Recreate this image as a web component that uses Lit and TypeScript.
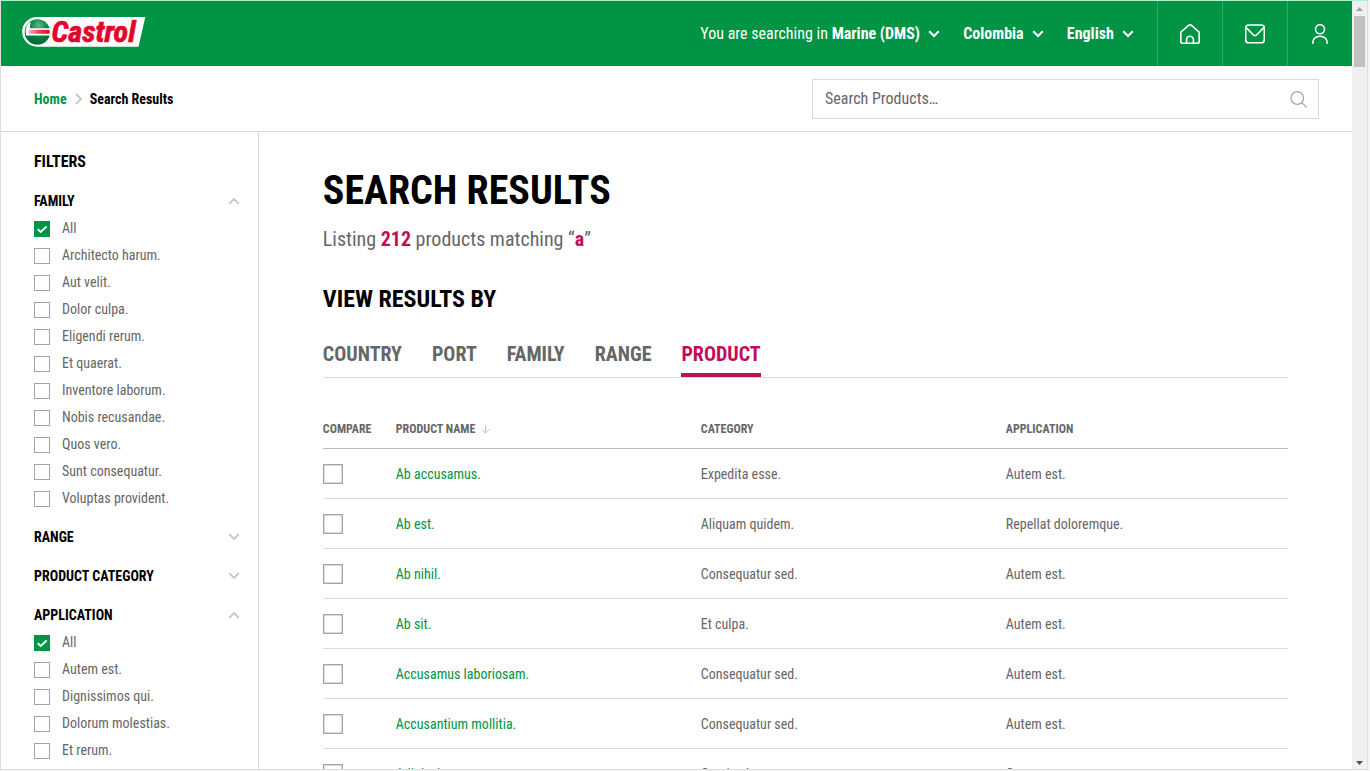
import { LitElement, html, css } from "lit";
import { customElement, property } from "lit/decorators.js";
import { classMap } from "lit/directives/class-map.js";

interface FilterGroup {
  title: string;
  open: boolean;
  items: string[];
}

const FILTERS: FilterGroup[] = [
  {
    title: "Family",
    open: true,
    items: ["All", "Architecto harum.", "Aut velit.", "Dolor culpa.", "Eligendi rerum.", "Et quaerat.",
      "Inventore laborum.", "Nobis recusandae.", "Quos vero.", "Sunt consequatur.", "Voluptas provident."],
  },
  { title: "Range", open: false, items: [] },
  { title: "Product category", open: false, items: [] },
  {
    title: "Application",
    open: true,
    items: ["All", "Autem est.", "Dignissimos qui.", "Dolorum molestias.", "Et rerum."],
  },
];

const TABS = ["Country", "Port", "Family", "Range", "Product"];

const ROWS = [
  ["Ab accusamus.", "Expedita esse.", "Autem est."],
  ["Ab est.", "Aliquam quidem.", "Repellat doloremque."],
  ["Ab nihil.", "Consequatur sed.", "Autem est."],
  ["Ab sit.", "Et culpa.", "Autem est."],
  ["Accusamus laboriosam.", "Consequatur sed.", "Autem est."],
  ["Accusantium mollitia.", "Consequatur sed.", "Autem est."],
  ["Adipisci ex.", "Omnis ab.", "Quo rerum."],
];

const chevron = (d: string, cls: string) => html`
  <svg class=${cls} width="12" height="8" viewBox="0 0 12 8" fill="none" stroke="currentColor"><path d=${d} /></svg>`;
const DOWN = "M1.2 1.2 6 6 10.8 1.2";
const UP = "M1.2 6.8 6 2 10.8 6.8";

@customElement("castrol-logo")
class CastrolLogo extends LitElement {
  static styles = css`
    :host { display: block; width: 124px; height: 32px; }
    .word { font: italic 700 30px "Roboto Condensed", Roboto, sans-serif; fill: #e2062c; stroke: #e2062c; stroke-width: 0.7; }
  `;
  render() {
    return html`
      <svg width="124" height="32" viewBox="0 0 124 32">
        <defs>
          <radialGradient id="ball" cx="0.55" cy="0.25" r="0.8">
            <stop offset="0" stop-color="#5fb985" />
            <stop offset="0.4" stop-color="#0b8843" />
            <stop offset="1" stop-color="#00632f" />
          </radialGradient>
          <linearGradient id="bar" x1="0" x2="1">
            <stop offset="0" stop-color="#f3b5bf" />
            <stop offset="0.5" stop-color="#e5405a" />
            <stop offset="1" stop-color="#e2062c" />
          </linearGradient>
        </defs>
        <path d="M15 1H123.3L116.5 30.7H15A14.8 14.8 0 0 1 15 1Z" fill="#fff" />
        <circle cx="15.4" cy="15.9" r="12.7" fill="url(#ball)" />
        <path d="M5.6 8.6 8.6 5.2 7.8 12.2H28.6V19.6H4.2Q2.6 13.4 5.6 8.6Z" fill="#fff" />
        <path d="M6.8 13.8H27.6V17.8H6.8Z" fill="url(#bar)" />
        <text class="word" x="29.6" y="26.2" textLength="84" lengthAdjust="spacingAndGlyphs">Castrol</text>
      </svg>`;
  }
}

@customElement("check-box")
class CheckBox extends LitElement {
  @property({ type: Boolean }) checked = false;
  @property({ type: Boolean }) large = false;
  static styles = css`
    :host { display: block; flex: none; }
    .box { box-sizing: border-box; width: 16px; height: 16px; border: 1px solid #a3a3a3; background: #fff; display: flex; align-items: center; justify-content: center; }
    .large { width: 20px; height: 20px; box-shadow: inset 0 0 0 0.5px #bbb; }
    .on { background: #009444; border-color: #009444; }
  `;
  render() {
    return html`<div class=${classMap({ box: true, large: this.large, on: this.checked })}>
      ${this.checked ? html`<svg width="14" height="14" viewBox="0 0 14 14" fill="none" stroke="#fff" stroke-width="2"><path d="M2.8 7.2 5.7 10 11.6 4.6" /></svg>` : ""}
    </div>`;
  }
}

@customElement("filter-panel")
class FilterPanel extends LitElement {
  static styles = css`
    :host { display: block; padding: 16px 18px 0 33px; border-right: 1px solid #dadada; box-sizing: border-box; width: 258px; overflow: hidden; }
    .title { margin: 0; font-size: 16px; line-height: 27px; font-weight: 700; color: #000; text-transform: uppercase; }
    .group { margin-top: 12px; }
    .head { display: flex; align-items: center; justify-content: space-between; height: 27px; font-size: 14px; font-weight: 700; color: #000; text-transform: uppercase; }
    .head .arrow { color: #c6c6c6; stroke-width: 1.8; margin: 1px 0.4px 0 0; }
    .item { display: flex; align-items: center; gap: 12px; height: 27px; color: #666; }
    .item check-box { margin-top: 2px; }
  `;
  render() {
    return html`<h2 class="title">Filters</h2>
      ${FILTERS.map((g) => html`<section class="group">
        <div class="head"><span>${g.title}</span>${chevron(g.open ? UP : DOWN, "arrow")}</div>
        ${g.items.map((t, i) => html`<label class="item"><check-box ?checked=${i === 0}></check-box><span>${t}</span></label>`)}
      </section>`)}`;
  }
}

@customElement("results-table")
class ResultsTable extends LitElement {
  static styles = css`
    :host { display: block; margin-top: 31px; color: #666; }
    .row { display: grid; grid-template-columns: 73px 305px 305px 282px; align-items: center; height: 49px; border-bottom: 1px solid #dadada; }
    .header { height: 39px; border-bottom-color: #bdbdbd; font-size: 12px; font-weight: 700; text-transform: uppercase; }
    .link { color: #009444; }
    .sort { margin-left: 5.5px; vertical-align: -1px; }
  `;
  render() {
    return html`
      <div class="row header">
        <span>Compare</span>
        <span>Product name<svg class="sort" width="9" height="9" viewBox="0 0 9 9" fill="none" stroke="#bdbdbd"><path d="M4.5 0.5V8M0.8 4.4 4.5 8.1 8.2 4.4" /></svg></span>
        <span>Category</span><span>Application</span>
      </div>
      ${ROWS.map((r) => html`<div class="row">
        <check-box large></check-box><span class="link">${r[0]}</span><span>${r[1]}</span><span>${r[2]}</span>
      </div>`)}`;
  }
}

@customElement("app-root")
class AppRoot extends LitElement {
  static styles = css`
    :host { display: block; height: 771px; background: #f4f4f4; font: 400 14px/20px "Roboto Condensed", Roboto, sans-serif; overflow: hidden; }
    .frame { box-sizing: border-box; width: 1368px; height: 770px; border: 1px solid #dedede; border-top-color: #a5f5d2; display: flex; background: #fff; }
    .page { width: 1351px; height: 768px; overflow: hidden; display: flex; flex-direction: column; }
    .topbar { flex: none; height: 65px; background: #009444; color: #fff; display: flex; align-items: center; font-size: 16px; }
    .logo { margin: -3px auto 0 21px; }
    .pick { display: flex; align-items: center; margin-right: 22.8px; white-space: pre; }
    .pick .arrow { stroke-width: 2; margin-left: 8.4px; }
    .icon { box-sizing: border-box; width: 65px; height: 65px; border-left: 1px solid #33a969; display: flex; align-items: center; justify-content: center; }
    .icon svg { fill: none; stroke: #fff; stroke-width: 1.6; stroke-linecap: round; stroke-linejoin: round; }
    .subbar { flex: none; box-sizing: border-box; height: 66px; border-bottom: 1px solid #dadada; display: flex; align-items: center; padding: 0 33px; font-weight: 700; color: #000; }
    .home { color: #009444; }
    .sep { margin: 0 8px; }
    .search { box-sizing: border-box; margin-left: auto; width: 507px; height: 40px; border: 1px solid #dadada; padding: 0 11px 0 12px; display: flex; align-items: center; justify-content: space-between; font-size: 16px; font-weight: 400; color: #666; }
    .search svg { margin-top: 1px; }
    .body { flex: 1; min-height: 0; display: flex; }
    .main { flex: 1; padding: 33px 64px 0 63.8px; overflow: hidden; }
    .h1 { margin: 0; font-size: 40px; line-height: 52px; font-weight: 700; color: #000; text-transform: uppercase; }
    .summary { margin: 7px 0 0; font-size: 20px; line-height: 30px; color: #666; }
    .summary b { color: #c30b59; }
    .h2 { margin: 29px 0 0; font-size: 24px; line-height: 32px; font-weight: 700; color: #000; text-transform: uppercase; }
    .tabs { display: flex; gap: 30px; height: 62px; border-bottom: 1px solid #dadada; align-items: flex-end; font-size: 20px; font-weight: 700; color: #666; text-transform: uppercase; }
    .tab { box-sizing: border-box; height: 38px; line-height: 30px; border-bottom: 4px solid transparent; }
    .active { color: #c30b59; border-bottom-color: #b81556; }
    .scrollbar { box-sizing: border-box; width: 15px; background: #f0f0f0; display: flex; flex-direction: column; align-items: center; padding: 6px 0 4px; }
    .thumb { width: 11px; height: 51px; margin-top: 5px; background: #c1c1c1; }
    .scrollbar .end { margin-top: auto; }
  `;

  private picker(lead: string, name: string) {
    return html`<div class="pick">${lead}<b>${name}</b>${chevron(DOWN, "arrow")}</div>`;
  }

  render() {
    return html`<div class="frame">
      <div class="page">
        <header class="topbar">
          <castrol-logo class="logo"></castrol-logo>
          ${this.picker("You are searching in ", "Marine (DMS)")}
          ${this.picker("", "Colombia")}
          ${this.picker("", "English")}
          <div class="icon"><svg width="20" height="20" viewBox="0 0 20 20"><path d="M0.8 8.2 8.6 1.3Q10 0.1 11.4 1.3L19.2 8.2V17.5Q19.2 19.2 17.5 19.2H2.5Q0.8 19.2 0.8 17.5Z" /><path d="M6.6 19V15.6A3.4 3.4 0 0 1 13.4 15.6V19" /></svg></div>
          <div class="icon"><svg width="20" height="20" viewBox="0 0 20 20"><rect x="0.7" y="1" width="18.6" height="17.8" rx="3" /><path d="M1.2 3.6 8.2 10.8Q10 12.6 11.8 10.8L18.8 3.6" /></svg></div>
          <div class="icon"><svg width="20" height="20" viewBox="0 0 20 20"><circle cx="10" cy="5.2" r="4.5" /><path d="M2.9 19.2V18A7.1 5.8 0 0 1 17.1 18V19.2" /></svg></div>
        </header>
        <div class="subbar">
          <span class="home">Home</span>
          <svg class="sep" width="7" height="12" viewBox="0 0 7 12" fill="none" stroke="#c8c8c8" stroke-width="1.9"><path d="M1 1 6 6 1 11" /></svg>
          <span>Search Results</span>
          <div class="search"><span>Search Products…</span>
            <svg width="17" height="17" viewBox="0 0 17 17" fill="none" stroke="#a3a3a3" stroke-width="1.2"><circle cx="7.3" cy="7" r="6.3" /><path d="M11.8 11.6 16.6 16.4" /></svg>
          </div>
        </div>
        <div class="body">
          <filter-panel></filter-panel>
          <main class="main">
            <h1 class="h1">Search results</h1>
            <p class="summary">Listing <b>212</b> products matching “<b>a</b>”</p>
            <h2 class="h2">View results by</h2>
            <nav class="tabs">${TABS.map((t) => html`<span class=${classMap({ tab: true, active: t === "Product" })}>${t}</span>`)}</nav>
            <results-table></results-table>
          </main>
        </div>
      </div>
      <div class="scrollbar">
        <svg width="7" height="4" viewBox="0 0 7 4" fill="#a0a0a0"><path d="M0 4 3.5 0 7 4Z" /></svg>
        <div class="thumb"></div>
        <svg class="end" width="7" height="4" viewBox="0 0 7 4" fill="#505050"><path d="M0 0H7L3.5 4Z" /></svg>
      </div>
    </div>`;
  }
}
